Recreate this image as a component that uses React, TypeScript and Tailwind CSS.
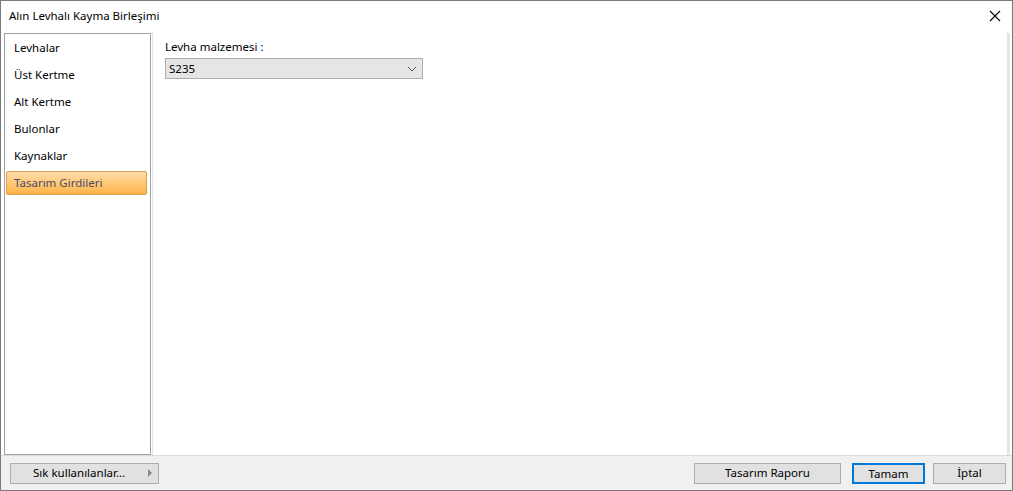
import React, { useState } from 'react';

const items = ['Levhalar', 'Üst Kertme', 'Alt Kertme', 'Bulonlar', 'Kaynaklar', 'Tasarım Girdileri'];

export default function App() {
  const [selected, setSelected] = useState('Tasarım Girdileri');

  return (
    <div className="w-[1013px] h-[491px] bg-white border border-[#7a7a7a] flex flex-col overflow-hidden text-[11.5px] text-black font-['Noto_Sans','Liberation_Sans',sans-serif]">
      {/* title bar */}
      <div className="h-[30px] flex items-center justify-between pl-[8px] pr-[10px] shrink-0">
        <span className="text-[11.5px] text-black">Alın Levhalı Kayma Birleşimi</span>
        <svg width="12" height="12" viewBox="0 0 12 12" className="mr-[1px]">
          <path d="M1 1 L11 11 M11 1 L1 11" stroke="#000" strokeWidth="1.1" />
        </svg>
      </div>

      <div className="flex flex-1 min-h-0 pl-[3px] pr-[2px] pt-[2px]">
        {/* left nav */}
        <div className="w-[147px] border border-[#a0a0a0] bg-white flex flex-col pt-0 pl-[1px] pr-[3px]">
          {items.map((it) => (
            <div
              key={it}
              onClick={() => setSelected(it)}
              className={
                it === selected
                  ? 'h-[24px] mt-[2px] flex items-center pl-[7px] rounded-[2px] border border-[#d9a04b] bg-gradient-to-b from-[#ffdcaa] via-[#ffc878] to-[#ffb347] text-[#4b4b6b]'
                  : 'h-[27px] flex items-center pl-[8px] text-black'
              }
            >
              {it}
            </div>
          ))}
        </div>

        {/* content */}
        <div className="flex-1 ml-[1px] border-l border-r-[3px] border-[#e6e6e6] bg-white pt-[5px] pl-[12px]">
          <div className="text-[#000] mb-[3px]">Levha malzemesi :</div>
          <div className="w-[258px] h-[21px] bg-[#e5e5e5] border border-[#adadad] flex items-center justify-between pl-[3px] pr-[5px]">
            <span>S235</span>
            <svg width="10" height="6" viewBox="0 0 10 6">
              <path d="M1 1 L5 5 L9 1" stroke="#555" strokeWidth="1" fill="none" />
            </svg>
          </div>
        </div>
      </div>

      {/* bottom bar */}
      <div className="h-[35px] bg-[#f0f0f0] border-t border-[#dcdcdc] flex items-center pl-[9px] pr-[6px] shrink-0">
        <button className="w-[149px] h-[21px] bg-[#e1e1e1] border border-[#adadad] flex items-center justify-between pl-[22px] pr-[5px]">
          <span>Sık kullanılanlar…</span>
          <svg width="5" height="8" viewBox="0 0 5 8">
            <path d="M0 0 L4 4 L0 8 Z" fill="#8a8a8a" />
          </svg>
        </button>
        <div className="flex-1" />
        <button className="w-[147px] h-[21px] bg-[#e1e1e1] border border-[#adadad] mr-[11px]">Tasarım Raporu</button>
        <button className="w-[73px] h-[21px] bg-[#e1e1e1] border-2 border-[#0078d7] mr-[8px]">Tamam</button>
        <button className="w-[73px] h-[21px] bg-[#e1e1e1] border border-[#adadad]">İptal</button>
      </div>
    </div>
  );
}
